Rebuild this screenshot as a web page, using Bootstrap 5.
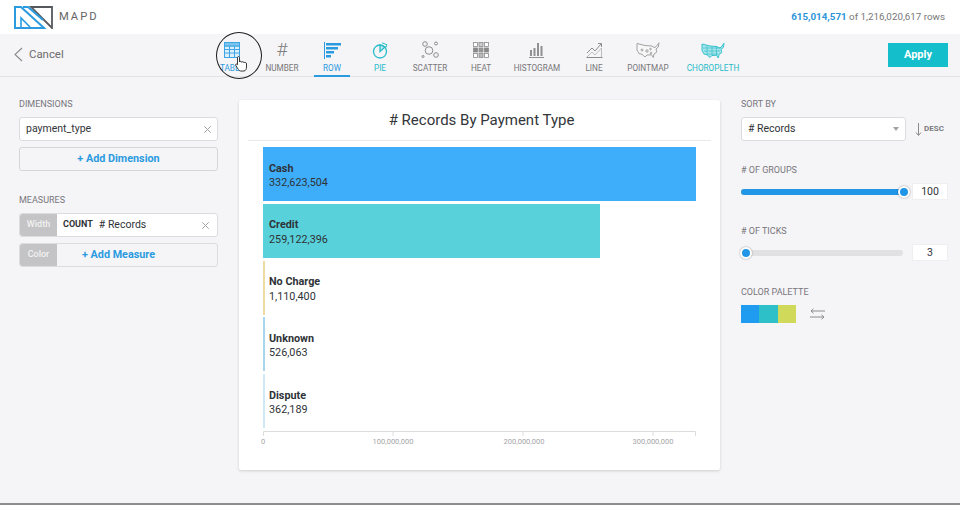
<!DOCTYPE html>
<html lang="en">
<head>
<meta charset="utf-8">
<title>MAPD chart editor</title>
<link href="https://cdn.jsdelivr.net/npm/bootstrap@5.3.0/dist/css/bootstrap.min.css" rel="stylesheet">
<style>
html,body{height:505px;overflow:hidden}
body{background:#f5f4f7;font-family:Roboto,"Liberation Sans",sans-serif;color:#2f3337;position:relative;border-bottom:2px solid #8d8d8d}
.topbar{height:34px;background:#fff;padding:0 15px 0 14px}
.logo-word{font-size:11.2px;letter-spacing:2px;color:#666;margin-left:6px;font-weight:400}
.rowcount{font-size:9.8px;color:#777}
.rowcount b{color:#2b95d8;font-weight:700}
.toolbar{height:43px;border-bottom:1px solid #e2e1e5;padding-right:12px}
.cancelbox{width:207px;padding-left:14px;color:#6d6d6d;font-size:11.4px;gap:6px}
.chart-tab{height:42px;flex:none;color:#777;font-size:8.2px;padding-top:6px;position:relative;line-height:12px}
.tab-ico{height:20px;display:flex;align-items:center;justify-content:center;margin-bottom:2px}
.hash{font-size:19px;font-weight:300;color:#808080;line-height:20px}
.w46{width:46px}.w48{width:48px}.w50{width:50px}.w54{width:54px}.w58{width:58px}.w64{width:64px}.w72{width:72px}
.tab-blue{color:#2b9be0}.tab-teal{color:#27bcc9}
.tab-line{position:absolute;left:7px;right:7px;bottom:-1px;height:2px;background:#2b9be0}
.applybtn{width:60px;height:24px;padding:1px 0 0;border:0;border-radius:0;background:#14bfcb;color:#fff;font-size:11px;font-weight:700;margin-top:-1px}
.applybtn:hover{background:#14bfcb;color:#fff}
.workarea{padding:23px 12px 0 19px}
.sidecol{width:199px;flex:none}
.rightcol{width:207px;flex:none}
.fieldlabel{font-size:9px;color:#77777c;line-height:8px;margin-bottom:9px;text-transform:uppercase}
.fieldbox{height:24px;background:#fff;border:1px solid #dcdcdf;border-radius:3px;font-size:10.5px;padding:0 6px;color:#33363a}
.addbtn{height:24px;width:100%;padding:0;background:#f5f4f7;border:1px solid #d6d6d9;border-radius:3px;color:#2b9be0;font-size:10.800px;font-weight:700;margin-top:6px}
.addbtn:hover{background:#f5f4f7;color:#2b9be0;border-color:#d6d6d9}
.gapmeasure{margin-top:25px}
.tagbox{width:37px;align-self:stretch;background:#c4c4c6;color:#f2f2f2;font-size:9px;font-weight:500;border-radius:2px 0 0 2px}
.slotbox{height:24px;border:1px solid #dcdcdf;border-radius:3px;overflow:hidden;background:#fff;font-size:10.5px}
.slotbox.emptyslot{background:#f5f4f7;margin-top:6px}
.countword{font-size:9px;font-weight:700;margin:0 6px 0 6px;color:#2f3337}
.closemark{flex:none}
.addlink{flex:1;text-align:center;color:#2b9be0;font-size:10.800px;font-weight:700;padding-right:37px}
.chartcard{width:481px;height:370px;margin:0 21px;border:0;border-radius:2px;box-shadow:0 1px 3px rgba(0,0,0,.16);padding:0 9px}
.charttitle{height:41px;border-bottom:1px solid #e9e9ec;font-size:15px;line-height:41px;text-align:center;color:#33363a;padding-left:4px}
.barlist{padding:6px 0 0 15px}
.barrow{height:54px;margin-bottom:2.8px;position:relative}
.barfill{height:100%}
.barlabel{position:absolute;left:6px;top:14.500px;font-size:10.800px;line-height:14.400px;color:#2f3337}
.barlabel strong{font-weight:700;display:block}
.axissvg{display:block;margin-left:14px;overflow:visible}
.axissvg text{font-size:7.500px;fill:#a5a5a8;font-family:Roboto,"Liberation Sans",sans-serif}
.selectbox{width:165px;height:24px;background:#fff;border:1px solid #dcdcdf;border-radius:3px;font-size:10.5px;padding:0 6px}
.caretdown{width:0;height:0;border-left:3.500px solid transparent;border-right:3.500px solid transparent;border-top:4px solid #a3a3a3}
.descword{font-size:8px;font-weight:700;color:#7b7b7f;margin-left:1px}
.groupstart{margin-top:25px}
.sliderrow{height:17px;margin-bottom:27px}
.slidertrack{width:162px;height:6px;background:#e1e1e3;border-radius:3px;position:relative;overflow:visible}
.sliderfill{background:#2196e6;border-radius:3px}
.sliderknob{position:absolute;top:-3px;width:12px;height:12px;border-radius:50%;background:#2196e6;border:2px solid #fff;box-shadow:0 0 2px rgba(0,0,0,.4)}
.knobend{left:157px}.knobstart{left:-1px}
.numbox{width:36px;height:17px;margin-left:9px;background:#fff;border:1px solid #efeff1;font-size:10.500px;line-height:15px;text-align:center}
.swatches{gap:10px}
.swatch{width:18.300px;height:18px}
.clickring{position:absolute;left:216px;top:32px;width:46px;height:47px;border:1.5px solid #1b1b1b;border-radius:50%;pointer-events:none}
.handcursor{position:absolute;left:235px;top:56px}
</style>
</head>
<body>
<header class="topbar d-flex align-items-center justify-content-between">
  <div class="d-flex align-items-center">
    <svg width="39" height="23" viewBox="0 0 39 23" fill="none">
      <path d="M17 1H38V22Z" stroke="#55585c" stroke-width="1.800"/>
      <path d="M1 22V1H7L30 22H1ZM9 1H14L29 14" stroke="#2b9be0" stroke-width="2"/>
      <path d="M7 21V12L16 21" stroke="#2b9be0" stroke-width="1.600"/>
    </svg>
    <span class="logo-word">MAPD</span>
  </div>
  <div class="rowcount"><b>615,014,571</b> of 1,216,020,617 rows</div>
</header>

<nav class="toolbar d-flex align-items-center">
  <div class="cancelbox d-flex align-items-center">
    <svg width="9" height="15" viewBox="0 0 9 15" fill="none" stroke="#8a8a8a" stroke-width="1.100"><path d="M8 1L1 7.500L8 14"/></svg>
    <span>Cancel</span>
  </div>
  <div class="chart-tab w50 text-center tab-blue">
    <div class="tab-ico"><svg width="16" height="16" viewBox="0 0 16 16" fill="#dceffb" stroke="#3ea6e6"><rect x=".5" y=".5" width="15" height="15"/><path d="M.5 4h15M.5 7.500h15M.5 11h15M5.500 1v14M10.500 1v14" fill="none"/><rect x=".5" y=".5" width="15" height="3.500" fill="#7cc3ee"/></svg></div>
    TABLE
  </div>
  <div class="chart-tab w50 text-center">
    <div class="tab-ico"><span class="hash">#</span></div>
    NUMBER
  </div>
  <div class="chart-tab w50 text-center tab-blue">
    <div class="tab-ico"><svg width="17" height="17" viewBox="0 0 17 17" fill="#2b9be0"><rect x="0" y="0" width="1" height="17"/><rect x="2" y="1" width="15" height="2.500"/><rect x="2" y="5" width="12" height="2.500"/><rect x="2" y="9" width="8" height="2.500"/><rect x="2" y="13" width="5" height="2.500"/></svg></div>
    ROW<span class="tab-line"></span>
  </div>
  <div class="chart-tab w46 text-center tab-teal">
    <div class="tab-ico"><svg width="17" height="17" viewBox="0 0 17 17" fill="none" stroke="#27bcc9" stroke-width="1.300"><circle cx="8" cy="9.500" r="6.500"/><path d="M8 9.500V3L13 5Z" fill="#bfeaee"/><path d="M10 .8L15 2.800L13.500 6" stroke-width="1"/></svg></div>
    PIE
  </div>
  <div class="chart-tab w54 text-center">
    <div class="tab-ico"><svg width="18" height="18" viewBox="0 0 18 18" fill="none" stroke="#8c8c8c"><circle cx="4" cy="3" r="2.300"/><circle cx="15" cy="2.500" r="1.500"/><circle cx="8" cy="9.500" r="3.800"/><circle cx="15" cy="14" r="2.300"/><circle cx="2" cy="15.500" r="1"/></svg></div>
    SCATTER
  </div>
  <div class="chart-tab w48 text-center">
    <div class="tab-ico"><svg width="16" height="16" viewBox="0 0 16 16" stroke="#8c8c8c" stroke-width=".8"><rect x=".5" y=".5" width="4" height="4" fill="#fff"/><rect x="6" y=".5" width="4" height="4" fill="#ccc"/><rect x="11.500" y=".5" width="4" height="4" fill="#fff"/><rect x=".5" y="6" width="4" height="4" fill="#888"/><rect x="6" y="6" width="4" height="4" fill="#999"/><rect x="11.500" y="6" width="4" height="4" fill="#888"/><rect x=".5" y="11.500" width="4" height="4" fill="#fff"/><rect x="6" y="11.500" width="4" height="4" fill="#bbb"/><rect x="11.500" y="11.500" width="4" height="4" fill="#fff"/></svg></div>
    HEAT
  </div>
  <div class="chart-tab w64 text-center">
    <div class="tab-ico"><svg width="16" height="16" viewBox="0 0 16 16" fill="#909090"><rect x="1" y="8" width="2" height="6"/><rect x="4.500" y="6" width="2" height="8"/><rect x="8" y="1" width="2" height="13"/><rect x="11.500" y="4" width="2" height="10"/><rect x="0" y="15" width="15" height="1"/></svg></div>
    HISTOGRAM
  </div>
  <div class="chart-tab w50 text-center">
    <div class="tab-ico"><svg width="17" height="16" viewBox="0 0 17 16" fill="none" stroke="#8c8c8c"><path d="M.5 15.500H16.500"/><path d="M1 11L6 6L9 9L15 2M12 1.500H15.500V5"/><path d="M1 15L6 10L9 13L15.500 6V15" stroke="#bdbdbd"/></svg></div>
    LINE
  </div>
  <div class="chart-tab w58 text-center">
    <div class="tab-ico"><svg width="24" height="16" viewBox="0 0 24 16" fill="#f7f7f8" stroke="#999" stroke-width=".9"><path d="M1 1.500L9 3.500L16 4L18 5.500L20 4.800L23 .8L22.300 5L20 7L20.800 10L18 12L17.300 15.500L15.500 12.800L11 13L9 15L6 12.300L3 11.500L1 8Z"/><circle cx="6" cy="8" r="1"/><circle cx="11" cy="9" r="1.200"/><circle cx="14.500" cy="7" r=".8"/><circle cx="15" cy="11" r=".8"/></svg></div>
    POINTMAP
  </div>
  <div class="chart-tab w72 text-center tab-teal">
    <div class="tab-ico"><svg width="24" height="17" viewBox="0 0 24 16" fill="#a6e4e9" stroke="#27bcc9" stroke-width=".9"><path d="M1 1.500L9 3.500L16 4L18 5.500L20 4.800L23 .8L22.300 5L20 7L20.800 10L18 12L17.300 15.500L15.500 12.800L11 13L9 15L6 12.300L3 11.500L1 8Z"/><path d="M2 5.500H20M3 8.500H19M6 11.500H17M6 3V12M11 4V13M15.500 4V13" fill="none" stroke-width=".6"/></svg></div>
    CHOROPLETH
  </div>
  <button class="btn applybtn ms-auto" type="button">Apply</button>
</nav>

<main class="workarea d-flex align-items-start">
  <aside class="sidecol">
    <div class="fieldlabel">Dimensions</div>
    <div class="fieldbox d-flex align-items-center justify-content-between">
      <span>payment_type</span>
      <svg class="closemark" width="7" height="7" viewBox="0 0 7 7" stroke="#a2a2a2"><path d="M.3 .3L6.700 6.700M6.700 .3L.3 6.700"/></svg>
    </div>
    <button class="btn addbtn" type="button">+ Add Dimension</button>
    <div class="fieldlabel gapmeasure">Measures</div>
    <div class="slotbox d-flex align-items-center">
      <span class="tagbox d-flex align-items-center justify-content-center">Width</span>
      <span class="countword">COUNT</span><span># Records</span>
      <svg class="closemark ms-auto me-2" width="7" height="7" viewBox="0 0 7 7" stroke="#a2a2a2"><path d="M.3 .3L6.700 6.700M6.700 .3L.3 6.700"/></svg>
    </div>
    <div class="slotbox emptyslot d-flex align-items-center">
      <span class="tagbox d-flex align-items-center justify-content-center">Color</span>
      <span class="addlink">+ Add Measure</span>
    </div>
  </aside>

  <section class="card chartcard">
    <div class="charttitle"># Records By Payment Type</div>
    <div class="barlist">
      <div class="barrow"><div class="barfill" style="width:433px;background:#3eaefa"></div><div class="barlabel"><strong>Cash</strong>332,623,504</div></div>
      <div class="barrow"><div class="barfill" style="width:337px;background:#58d1da"></div><div class="barlabel"><strong>Credit</strong>259,122,396</div></div>
      <div class="barrow"><div class="barfill" style="width:2px;background:#f0dba3"></div><div class="barlabel"><strong>No Charge</strong>1,110,400</div></div>
      <div class="barrow"><div class="barfill" style="width:1.500px;background:#a8d5ee"></div><div class="barlabel"><strong>Unknown</strong>526,063</div></div>
      <div class="barrow"><div class="barfill" style="width:1.500px;background:#cdeaf6"></div><div class="barlabel"><strong>Dispute</strong>362,189</div></div>
    </div>
    <svg class="axissvg" width="450" height="24" viewBox="0 0 450 24" fill="none" stroke="#dcdcde">
      <path d="M1.500 .5V5M1.500 .5H433.500V5M131 .5V5M261 .5V5M391 .5V5"/>
      <g stroke="none" text-anchor="middle">
        <text x="1" y="13">0</text>
        <text x="131" y="13">100,000,000</text>
        <text x="262" y="13">200,000,000</text>
        <text x="391" y="13">300,000,000</text>
      </g>
    </svg>
  </section>

  <aside class="rightcol">
    <div class="fieldlabel">Sort by</div>
    <div class="d-flex align-items-center">
      <div class="selectbox d-flex align-items-center justify-content-between">
        <span># Records</span><span class="caretdown"></span>
      </div>
      <svg class="ms-2" width="9" height="13" viewBox="0 0 9 13" fill="none" stroke="#8c8c8c"><path d="M4.500 0V12M2 9.500L4.500 12.500L7 9.500"/></svg>
      <span class="descword">DESC</span>
    </div>
    <div class="fieldlabel groupstart"># of Groups</div>
    <div class="sliderrow d-flex align-items-center">
      <div class="progress slidertrack"><div class="progress-bar sliderfill" style="width:100%"></div><span class="sliderknob knobend"></span></div>
      <div class="numbox">100</div>
    </div>
    <div class="fieldlabel"># of Ticks</div>
    <div class="sliderrow d-flex align-items-center">
      <div class="progress slidertrack"><span class="sliderknob knobstart"></span></div>
      <div class="numbox">3</div>
    </div>
    <div class="fieldlabel">Color Palette</div>
    <div class="d-flex align-items-center swatches">
      <div class="d-flex">
        <span class="swatch" style="background:#1f9cf0"></span>
        <span class="swatch" style="background:#2dc0c8"></span>
        <span class="swatch" style="background:#d0d95a"></span>
      </div>
      <svg class="ms-1" width="15" height="12" viewBox="0 0 15 12" fill="none" stroke="#8c8c8c"><path d="M15 3H1M3.500 .8L1 3L3.500 5.200M0 9H14M11.500 6.800L14 9L11.500 11.200"/></svg>
    </div>
  </aside>
</main>

<div class="clickring"></div>
<svg class="handcursor" width="13" height="16" viewBox="0 0 13 16" fill="#fff" stroke="#222" stroke-width=".9"><path d="M2.500 1.500C2.500 .3 4.500 .3 4.500 1.500V6C5 5 6.500 5 6.700 6.300C7.300 5.300 8.800 5.500 9 6.800C9.700 6 11.500 6.300 11.500 8V11C11.500 13 10.500 15 9 15H5.500C4.500 15 3.800 14 3 13L.8 9.500C.2 8.300 1.500 7.500 2.500 8.700Z"/></svg>
</body>
</html>
